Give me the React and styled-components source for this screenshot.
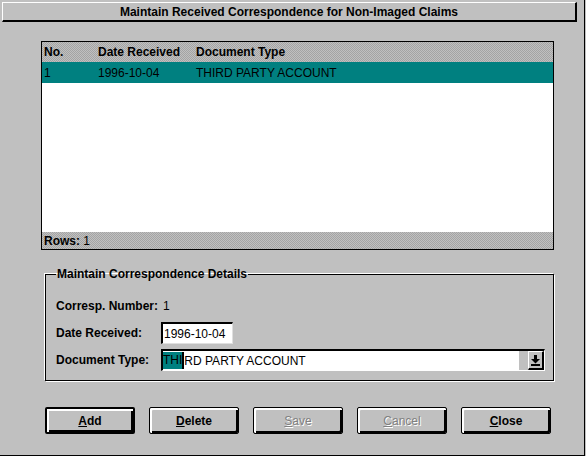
import React from 'react'
import styled, { createGlobalStyle } from 'styled-components'

const GlobalStyle = createGlobalStyle`
  html, body {
    margin: 0;
    padding: 0;
    background: #c0c0c0;
  }
  body {
    font-family: "Liberation Sans", Arial, sans-serif;
    font-size: 12px;
    color: #000;
  }
`

const dither = 'repeating-conic-gradient(#c0c0c0 0% 25%, #a4a4a4 0% 50%) 0 0 / 2px 2px'

const App = () => (
  <Window>
    <GlobalStyle />
    <TitleBar>Maintain Received Correspondence for Non-Imaged Claims</TitleBar>

    <ListBox>
      <ListHeader>
        <span>No.</span>
        <span>Date Received</span>
        <span>Document Type</span>
      </ListHeader>
      <ListRow selected>
        <span>1</span>
        <span>1996-10-04</span>
        <span>THIRD PARTY ACCOUNT</span>
      </ListRow>
      <ListFill />
      <ListFooter>
        <b>Rows:</b>&nbsp;1
      </ListFooter>
    </ListBox>

    <Group>
      <Legend>Maintain Correspondence Details</Legend>
      <Form>
        <Label>Corresp. Number:</Label>
        <Value>1</Value>
        <Label>Date Received:</Label>
        <DateInput>1996-10-04</DateInput>
        <Label>Document Type:</Label>
        <Combo>
          <ComboField>
            <Highlight>THI</Highlight>RD PARTY ACCOUNT
          </ComboField>
          <ComboGap />
          <DropButton>
            <svg width="9" height="11" viewBox="0 0 9 11">
              <rect x="3" y="0" width="3" height="4" fill="#000" />
              <polygon points="0,4 9,4 4.5,8.5" fill="#000" />
              <rect x="0" y="9" width="9" height="2" fill="#000" />
            </svg>
          </DropButton>
        </Combo>
      </Form>
    </Group>

    <ButtonRow>
      <Button isDefault><u>A</u>dd</Button>
      <Button><u>D</u>elete</Button>
      <Button disabled><u>S</u>ave</Button>
      <Button disabled><u>C</u>ancel</Button>
      <Button><u>C</u>lose</Button>
    </ButtonRow>
  </Window>
)

const Window = styled.div`
  width: 585px;
  height: 456px;
  box-sizing: border-box;
  border-right: 1px solid #000;
  border-bottom: 1px solid #000;
  background: #c0c0c0;
  display: flex;
  flex-direction: column;
  align-items: flex-start;
`
const TitleBar = styled.div`
  margin: 2px 0 0 2px;
  width: 575px;
  height: 20px;
  box-sizing: border-box;
  border-top: 1px solid #fff;
  border-left: 1px solid #fff;
  border-bottom: 2px solid #000;
  border-right: 2px solid #000;
  display: flex;
  align-items: center;
  justify-content: center;
  font-weight: bold;
  font-size: 12px;
`
const ListBox = styled.div`
  margin: 19px 0 0 41px;
  width: 513px;
  height: 209px;
  box-sizing: border-box;
  border: 1px solid #000;
  background: #fff;
  display: flex;
  flex-direction: column;
`
const ListHeader = styled.div`
  height: 20px;
  background: ${dither};
  display: grid;
  grid-template-columns: 54px 98px 1fr;
  align-items: center;
  padding-left: 2px;
  font-weight: bold;
`
const ListRow = styled.div`
  height: 21px;
  background: ${p => (p.selected ? '#008080' : '#fff')};
  display: grid;
  grid-template-columns: 54px 98px 1fr;
  align-items: center;
  padding-left: 2px;
`
const ListFill = styled.div`
  flex: 1;
`
const ListFooter = styled.div`
  height: 17px;
  background: ${dither};
  display: flex;
  align-items: center;
  padding-left: 2px;
`
const Group = styled.fieldset`
  margin: 18px 0 0 45px;
  width: 509px;
  box-sizing: border-box;
  min-width: 0;
  padding: 14px 10px 9px 10px;
  border: 1px solid #000;
  box-shadow: -1px -1px 0 #fff, 1px 1px 0 #fff;
`
const Legend = styled.legend`
  padding: 0 1px;
  margin-left: 0;
  font-weight: bold;
  font-size: 12px;
  line-height: 13px;
`
const Form = styled.div`
  display: grid;
  grid-template-columns: 105px auto;
  grid-template-rows: 22px 22px 22px;
  row-gap: 5px;
  align-items: center;
  justify-items: start;
`
const Label = styled.span`
  font-weight: bold;
`
const Value = styled.span`
  padding-left: 2px;
`
const DateInput = styled.div`
  width: 72px;
  height: 22px;
  box-sizing: border-box;
  border-style: solid;
  border-width: 2px 1px 1px 2px;
  border-color: #000 #dfdfdf #dfdfdf #000;
  background: #fff;
  display: flex;
  align-items: center;
  padding-left: 1px;
`
const Combo = styled.div`
  width: 384px;
  height: 22px;
  box-sizing: border-box;
  border-style: solid;
  border-width: 2px 1px 1px 2px;
  border-color: #000 #fff #fff #000;
  display: flex;
`
const ComboField = styled.div`
  flex: 1;
  background: #fff;
  display: flex;
  align-items: center;
`
const Highlight = styled.span`
  background: #008080;
  border-right: 2px solid #000;
  line-height: 17px;
`
const ComboGap = styled.div`
  width: 9px;
`
const DropButton = styled.div`
  width: 16px;
  box-sizing: border-box;
  border-style: solid;
  border-width: 1px 2px 2px 1px;
  border-color: #fff #000 #000 #fff;
  background: #c0c0c0;
  display: flex;
  align-items: center;
  justify-content: center;
`
const ButtonRow = styled.div`
  margin: 26px 0 0 45px;
  display: flex;
  gap: 14px;
`
const Button = styled.button`
  width: 90px;
  height: 27px;
  box-sizing: border-box;
  padding: 0;
  border: ${p => (p.isDefault ? '2px' : '1px')} solid #000;
  border-radius: 2px;
  background: #c0c0c0;
  box-shadow: inset 2px 2px 0 #fff, inset -2px -2px 0 #000;
  font-family: "Liberation Sans", Arial, sans-serif;
  font-weight: bold;
  font-size: 12px;
  color: #000;
  &:disabled {
    color: #808080;
    font-weight: normal;
    text-shadow: 1px 1px 0 #fff;
  }
`

export default App
